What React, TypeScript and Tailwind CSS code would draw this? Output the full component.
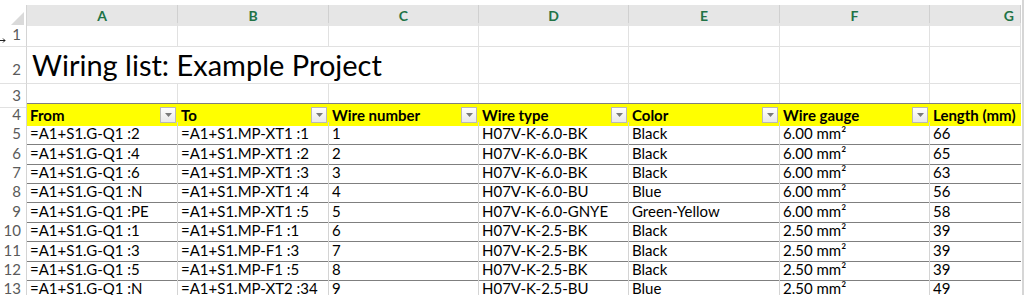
import React from 'react';

const font = { fontFamily: 'Lato, "Open Sans", sans-serif' };

const columns = ['A', 'B', 'C', 'D', 'E', 'F', 'G'];
const headers = ['From', 'To', 'Wire number', 'Wire type', 'Color', 'Wire gauge', 'Length (mm)'];

const rows: string[][] = [
  ['=A1+S1.G-Q1 :2', '=A1+S1.MP-XT1 :1', '1', 'H07V-K-6.0-BK', 'Black', '6.00 mm²', '66'],
  ['=A1+S1.G-Q1 :4', '=A1+S1.MP-XT1 :2', '2', 'H07V-K-6.0-BK', 'Black', '6.00 mm²', '65'],
  ['=A1+S1.G-Q1 :6', '=A1+S1.MP-XT1 :3', '3', 'H07V-K-6.0-BK', 'Black', '6.00 mm²', '63'],
  ['=A1+S1.G-Q1 :N', '=A1+S1.MP-XT1 :4', '4', 'H07V-K-6.0-BU', 'Blue', '6.00 mm²', '56'],
  ['=A1+S1.G-Q1 :PE', '=A1+S1.MP-XT1 :5', '5', 'H07V-K-6.0-GNYE', 'Green-Yellow', '6.00 mm²', '58'],
  ['=A1+S1.G-Q1 :1', '=A1+S1.MP-F1 :1', '6', 'H07V-K-2.5-BK', 'Black', '2.50 mm²', '39'],
  ['=A1+S1.G-Q1 :3', '=A1+S1.MP-F1 :3', '7', 'H07V-K-2.5-BK', 'Black', '2.50 mm²', '39'],
  ['=A1+S1.G-Q1 :5', '=A1+S1.MP-F1 :5', '8', 'H07V-K-2.5-BK', 'Black', '2.50 mm²', '39'],
  ['=A1+S1.G-Q1 :N', '=A1+S1.MP-XT2 :34', '9', 'H07V-K-2.5-BU', 'Blue', '2.50 mm²', '49'],
];

const rowHeights = ['h-[20px]', 'h-[19px]', 'h-[19px]', 'h-[20px]', 'h-[19px]', 'h-[20px]', 'h-[19px]', 'h-[19px]', 'h-[20px]'];

const gridCols = 'grid grid-cols-[27px_151px_151px_150px_150px_151px_150px_91px]';

const FilterButton = () => (
  <div className="w-[16px] h-[16px] border border-[#b8b8b8] bg-gradient-to-b from-white to-[#e8e8e8] flex items-center justify-center shrink-0">
    <svg width="7" height="4" viewBox="0 0 7 4">
      <path d="M0 0 L7 0 L3.5 4 Z" fill="#7a7a7a" />
    </svg>
  </div>
);

const RowNum = ({ n }: { n: number }) => (
  <div className="flex items-center justify-end pr-[5px] text-[15px] text-[#5a5a5a] border-b border-[#e1e1e1] border-r border-r-[#d4d4d4]">
    {n}
  </div>
);

export default function App() {
  return (
    <div className="w-[1024px] h-[295px] overflow-hidden bg-white text-black flex" style={font}>
      <div className="w-[1021px]">
        <div className="h-[5px]" />

        {/* column letters */}
        <div className={`${gridCols} h-[18px] border-b-2 border-[#217346]`}>
          <div className="relative bg-white border-r border-[#d4d4d4]">
            <svg className="absolute right-[2px] bottom-[1px]" width="13" height="13" viewBox="0 0 13 13">
              <path d="M13 0 L13 13 L0 13 Z" fill="#dadada" />
            </svg>
          </div>
          {columns.map((c, i) => (
            <div
              key={c}
              className={`bg-[#e6e6e6] border-r border-[#d0d0d0] flex items-center text-[14px] font-bold text-[#217346] ${
                i === 6 ? 'justify-end pr-[6px]' : 'justify-center'
              }`}
            >
              {c}
            </div>
          ))}
        </div>

        {/* row 1 */}
        <div className={`${gridCols} h-[19px]`}>
          <div className="relative flex items-center justify-end pr-[5px] text-[15px] text-[#5a5a5a] border-b border-[#e1e1e1] border-r border-r-[#d4d4d4]">
            <svg className="absolute left-0 top-[15px]" width="6" height="5" viewBox="0 0 6 5">
              <path d="M0 2.5 H5 M3 0.5 L5 2.5 L3 4.5" stroke="#222" strokeWidth="1" fill="none" />
            </svg>
            1
          </div>
          {columns.map(c => (
            <div key={c} className="border-b border-r border-[#e1e1e1]" />
          ))}
        </div>

        {/* row 2: title */}
        <div className={`${gridCols} h-[42px]`}>
          <div className="flex items-end pb-[3px] justify-end pr-[5px] text-[15px] text-[#5a5a5a] border-b border-[#e1e1e1] border-r border-r-[#d4d4d4]">
            2
          </div>
          <div className="relative border-b border-[#e1e1e1] col-span-7">
            <span className="absolute left-[5px] bottom-[4px] text-[29px] leading-none whitespace-nowrap">
              Wiring list: Example Project
            </span>
            <div className="h-full grid grid-cols-[151px_151px_150px_150px_151px_150px_91px]">
              <div />
              <div />
              <div className="border-r border-[#e1e1e1]" />
              <div className="border-r border-[#e1e1e1]" />
              <div className="border-r border-[#e1e1e1]" />
              <div className="border-r border-[#e1e1e1]" />
              <div className="border-r border-[#e1e1e1]" />
            </div>
          </div>
        </div>

        {/* row 3 */}
        <div className={`${gridCols} h-[19px]`}>
          <RowNum n={3} />
          {columns.map(c => (
            <div key={c} className="border-b border-r border-[#e1e1e1]" />
          ))}
        </div>

        {/* row 4: table header */}
        <div className={`${gridCols} h-[19px]`}>
          <div className="flex items-center justify-end pr-[5px] text-[15px] text-[#5a5a5a] border-r border-[#d4d4d4]">4</div>
          {headers.map((h, i) => (
            <div
              key={h}
              className="bg-[#ffff00] border-t border-[#7f7f7f] flex items-center justify-between pl-[3px] pr-[2px] text-[15px] font-bold whitespace-nowrap overflow-hidden"
            >
              <span>{h}</span>
              {i < 6 && <FilterButton />}
            </div>
          ))}
        </div>

        {/* data rows */}
        {rows.map((r, ri) => (
          <div key={ri} className={`${gridCols} ${rowHeights[ri]}`}>
            <div className="flex items-center justify-end pr-[5px] text-[15px] text-[#5a5a5a] border-r border-[#d4d4d4]">
              {ri + 5}
            </div>
            {r.map((v, ci) => (
              <div
                key={ci}
                className={`flex items-center pl-[3px] text-[15px] whitespace-nowrap overflow-hidden border-b border-[#7f7f7f] ${
                  ci < 6 ? 'border-r border-r-[#d4d4d4]' : ''
                }`}
              >
                {v}
              </div>
            ))}
          </div>
        ))}
      </div>
      <div className="w-[1px]" />
      <div className="w-[2px] bg-[#d6d6d6]" />
    </div>
  );
}
